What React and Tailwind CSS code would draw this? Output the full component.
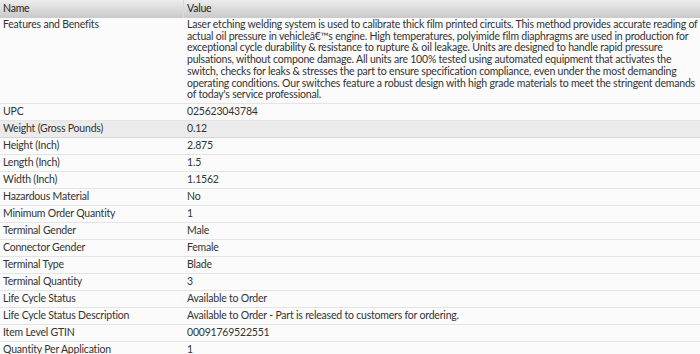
import React from "react";

const rows = [
  ["UPC", "025623043784"],
  ["Weight (Gross Pounds)", "0.12", true],
  ["Height (Inch)", "2.875"],
  ["Length (Inch)", "1.5"],
  ["Width (Inch)", "1.1562"],
  ["Hazardous Material", "No"],
  ["Minimum Order Quantity", "1"],
  ["Terminal Gender", "Male"],
  ["Connector Gender", "Female"],
  ["Terminal Type", "Blade"],
  ["Terminal Quantity", "3"],
  ["Life Cycle Status", "Available to Order"],
  ["Life Cycle Status Description", "Available to Order - Part is released to customers for ordering."],
  ["Item Level GTIN", "00091769522551"],
  ["Quantity Per Application", "1"],
];

const lines = [
  "Laser etching welding system is used to calibrate thick film printed circuits. This method provides accurate reading of",
  "actual oil pressure in vehicleâ€™s engine. High temperatures, polyimide film diaphragms are used in production for",
  "exceptional cycle durability & resistance to rupture & oil leakage. Units are designed to handle rapid pressure",
  "pulsations, without compone damage. All units are 100% tested using automated equipment that activates the",
  "switch, checks for leaks & stresses the part to ensure specification compliance, even under the most demanding",
  "operating conditions. Our switches feature a robust design with high grade materials to meet the stringent demands",
  "of today's service professional.",
];

export default function App() {
  return (
    <div
      className="w-[700px] h-[354px] overflow-hidden bg-white text-[10.5px] tracking-[-0.2px] text-[#333]"
      style={{ fontFamily: 'Lato, "DejaVu Sans", sans-serif' }}
    >
      <div className="flex h-[18px] items-center bg-gradient-to-b from-[#ededed] to-[#c9c9c9] text-[#222]">
        <div className="w-[184px] pl-[3px] border-r border-[#d8d8d8] h-full flex items-center">Name</div>
        <div className="pl-[3px]">Value</div>
      </div>
      <div className="flex border-b border-[#e4e4e4] bg-[#fbfbfb] pt-[1px] pb-[2px] leading-[11.7px]">
        <div className="w-[184px] pl-[3px] shrink-0">Features and Benefits</div>
        <div className="pl-[3px] whitespace-nowrap">
          {lines.map((l, i) => (
            <div key={i}>{l}</div>
          ))}
        </div>
      </div>
      {rows.map(([n, v, hl], i) => (
        <div
          key={i}
          className={
            "flex h-[17px] items-center border-b " +
            (hl ? "bg-[#ebebeb] border-[#d6d6d6]" : "bg-[#fbfbfb] border-[#e4e4e4]")
          }
        >
          <div className="w-[184px] pl-[3px] shrink-0 whitespace-nowrap">{n}</div>
          <div className="pl-[3px] whitespace-nowrap">{v}</div>
        </div>
      ))}
    </div>
  );
}
